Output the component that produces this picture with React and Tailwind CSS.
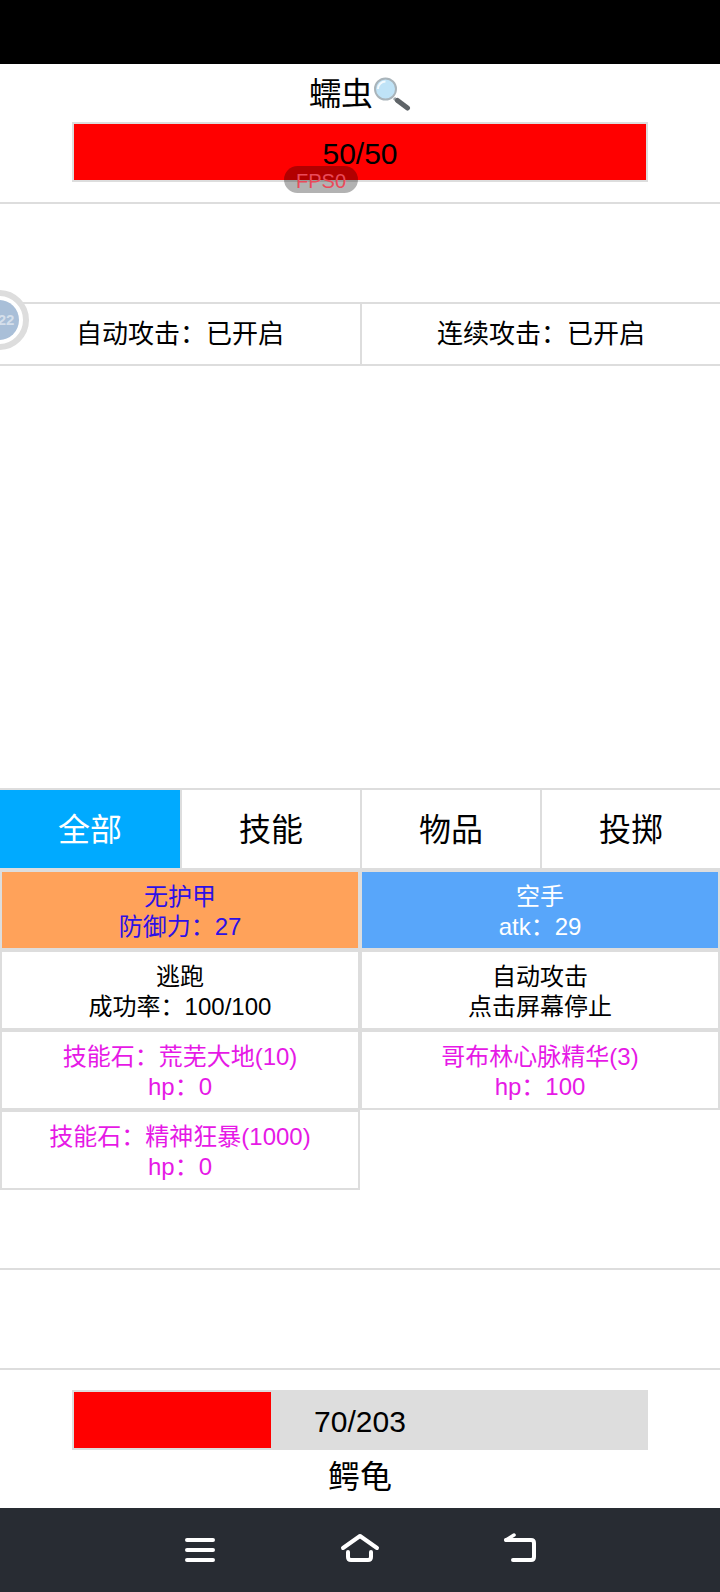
import React from "react";

const celdas = [
  { id: 1, titulo: "无护甲", detalle: "防御力：27", fondo: "bg-[#ffa25a]", texto: "text-[#2d10e6]" },
  { id: 2, titulo: "空手", detalle: "atk：29", fondo: "bg-[#58a6fa]", texto: "text-white" },
  { id: 3, titulo: "逃跑", detalle: "成功率：100/100", fondo: "bg-white", texto: "text-black" },
  { id: 4, titulo: "自动攻击", detalle: "点击屏幕停止", fondo: "bg-white", texto: "text-black" },
  { id: 5, titulo: "技能石：荒芜大地(10)", detalle: "hp：0", fondo: "bg-white", texto: "text-[#e619e6]" },
  { id: 6, titulo: "哥布林心脉精华(3)", detalle: "hp：100", fondo: "bg-white", texto: "text-[#e619e6]" },
  { id: 7, titulo: "技能石：精神狂暴(1000)", detalle: "hp：0", fondo: "bg-white", texto: "text-[#e619e6]" },
];

const tabs = ["全部", "技能", "物品", "投掷"];

function Barra({ actual, max, className = "" }) {
  return (
    <div className={`relative mx-auto h-[60px] w-[576px] border-2 border-[#dddddd] bg-[#dddddd] ${className}`}>
      <div className="absolute inset-y-0 left-0 bg-[#ff0000]" style={{ width: `${(actual / max) * 100}%` }} />
      <div className="relative flex h-full items-center justify-center pt-[3px] text-[30px] leading-none text-black">
        {actual}/{max}
      </div>
    </div>
  );
}

function Lupa() {
  return (
    <svg width="38" height="34" viewBox="0 0 38 34" className="shrink-0">
      <line x1="21" y1="21" x2="24" y2="24" stroke="#9aa3a8" strokeWidth="3" />
      <line x1="24.500" y1="23.500" x2="34.500" y2="31" stroke="#5f6468" strokeWidth="5" strokeLinecap="round" />
      <circle cx="12.500" cy="12" r="10.500" fill="#bfe3f7" stroke="#a9b4ba" strokeWidth="2" />
      <path d="M5 12a7.500 7.500 0 0 1 7.500-7.500" fill="none" stroke="#ffffff" strokeWidth="2" opacity="0.8" />
    </svg>
  );
}

export default function App() {
  return (
    <div className="relative h-[1592px] w-[720px] overflow-hidden bg-white font-['Liberation_Sans','Noto_Sans_CJK_SC',sans-serif] text-black">
      <div className="h-16 bg-black" />

      {/* Enemigo */}
      <div className="h-[140px] border-b-2 border-[#dddddd] pt-[13px]">
        <div className="flex h-[34px] items-center justify-center text-[32px] leading-none">
          <span>蠕虫</span>
          <Lupa />
        </div>
        <Barra actual={50} max={50} className="mt-[11px]" />
      </div>

      <div className="h-[98px]" />

      {/* Auto ataque */}
      <div className="grid h-[64px] grid-cols-2 border-y-2 border-[#dddddd] text-[26px]">
        <div className="flex items-center justify-center">自动攻击：已开启</div>
        <div className="flex items-center justify-center border-l-2 border-[#dddddd]">连续攻击：已开启</div>
      </div>

      <div className="h-[422px]" />

      {/* Tabs */}
      <div className="grid h-[82px] grid-cols-4 border-y-2 border-[#dddddd] text-[32px]">
        {tabs.map((t, i) => (
          <div
            key={t}
            className={`flex items-center justify-center pt-[2px] ${
              i === 0 ? "bg-[#00aaff] text-white" : "border-l-2 border-[#dddddd]"
            }`}
          >
            {t}
          </div>
        ))}
      </div>

      {/* Celdas */}
      <div className="grid h-[320px] grid-cols-2 content-start">
        {celdas.map((c) => (
          <div
            key={c.id}
            className={`flex h-20 flex-col items-center justify-center border-2 border-[#dddddd] pt-[3px] text-[24px] leading-[30px] ${c.fondo} ${c.texto}`}
          >
            <div>{c.titulo}</div>
            <div>{c.detalle}</div>
          </div>
        ))}
      </div>

      <div className="h-[80px] border-b-2 border-[#dddddd]" />
      <div className="h-[100px] border-b-2 border-[#dddddd]" />

      {/* Jugador */}
      <div className="h-[138px] pt-5">
        <Barra actual={70} max={203} />
        <div className="mt-[10px] text-center text-[32px] leading-[34px]">鳄龟</div>
      </div>

      {/* Barra de navegacion */}
      <div className="flex h-[84px] items-start justify-center bg-[#282c33]">
        <svg width="360" height="84" viewBox="0 0 360 84" fill="none" stroke="#ffffff" strokeWidth="4" strokeLinecap="round" strokeLinejoin="round">
          <path d="M7 32h26M7 42h26M7 52h26" />
          <path d="M163 40l17-12 17 12" />
          <path d="M168 44v5q0 3 3 3h17q3 0 3-3v-5" />
          <path d="M326 32h25q3 0 3 3v14q0 3-3 3h-18" />
          <path d="M326 32l8-5" strokeWidth="3.500" />
        </svg>
      </div>

      {/* FPS flotante */}
      <div className="absolute left-[284px] top-[166px] flex h-[27px] w-[74px] items-center justify-center rounded-full bg-black/30 pt-[2px] text-[20px] leading-none text-[#ea4a5a]">
        FPS0
      </div>

      {/* Avatar flotante */}
      <div className="absolute left-[-31px] top-[290px] flex size-[60px] items-center justify-center rounded-full border-[6px] border-[#dddddd] bg-white">
        <div className="flex size-[40px] items-center justify-center rounded-full bg-[#a9bfd8] pl-[14px] text-[15px] font-bold text-[#d5dfeb]">
          22
        </div>
      </div>
    </div>
  );
}
